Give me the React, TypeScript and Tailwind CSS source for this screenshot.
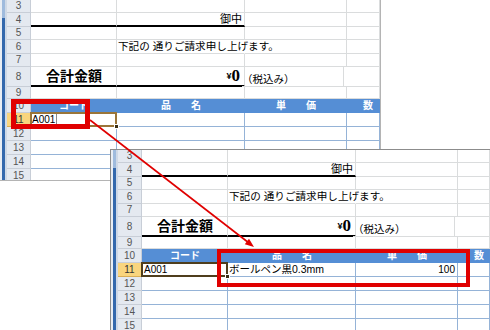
import React from "react";

type HeadProps = { n: string; active?: boolean };

const Head = ({ n, active }: HeadProps) => (
  <div
    className={`w-[24px] shrink-0 flex items-center justify-center border-r border-b text-[10px] leading-none ${
      active
        ? "bg-[#f9d57e] border-[#d9ad55] text-[#333]"
        : "bg-[#e4e9f0] border-[#c8ced7] text-[#555]"
    }`}
  >
    {n}
  </div>
);

const GRID = "border-b border-r border-[#dadcdd]";
const TGRID = "border-b border-r border-[#95b3d7]";

// left outline strip of the window
const Strip = () => (
  <div className="w-[7px] shrink-0 flex bg-[#dfe6ef]">
    <div className="w-[2px] bg-[#e9eef4]" />
    <div className="w-[3px] flex flex-col">
      <div className="h-[18px] bg-[#9fbbdd]" />
      <div className="flex-1 bg-[#3469ad]" />
    </div>
    <div className="w-[2px] bg-[#cfd9e6]" />
  </div>
);

type SheetProps = { filled?: boolean };

const Sheet = ({ filled }: SheetProps) => (
  <div className="flex h-full w-full bg-white overflow-hidden">
    <Strip />
    <div className="flex flex-col flex-1 overflow-hidden">
      {/* 3 */}
      <div className="flex h-[13px] shrink-0">
        <Head n="3" />
        <div className={`w-[86px] ${GRID}`} />
        <div className={`w-[128px] ${GRID}`} />
        <div className={`w-[102px] ${GRID}`} />
        <div className={`flex-1 ${GRID}`} />
      </div>
      {/* 4 */}
      <div className="flex h-[14px] shrink-0">
        <Head n="4" />
        <div className="w-[86px] border-r border-[#dadcdd] border-b-2 border-b-black" />
        <div className="w-[128px] border-r border-[#dadcdd] border-b-2 border-b-black flex items-center justify-end pr-[2px] text-[11px]">
          御中
        </div>
        <div className={`w-[102px] ${GRID}`} />
        <div className={`flex-1 ${GRID}`} />
      </div>
      {/* 5 */}
      <div className="flex h-[13px] shrink-0">
        <Head n="5" />
        <div className={`w-[86px] ${GRID}`} />
        <div className={`w-[128px] ${GRID}`} />
        <div className={`w-[102px] ${GRID}`} />
        <div className={`flex-1 ${GRID}`} />
      </div>
      {/* 6 */}
      <div className="flex h-[14px] shrink-0">
        <Head n="6" />
        <div className={`w-[86px] ${GRID}`} />
        <div className={`w-[128px] ${GRID} border-r-transparent flex items-center pl-[1px] text-[10.6px] whitespace-nowrap`}>
          下記の 通りご請求申し上げます。
        </div>
        <div className={`w-[102px] ${GRID}`} />
        <div className={`flex-1 ${GRID}`} />
      </div>
      {/* 7 */}
      <div className="flex h-[13px] shrink-0">
        <Head n="7" />
        <div className={`w-[86px] ${GRID}`} />
        <div className={`w-[128px] ${GRID}`} />
        <div className={`w-[102px] ${GRID}`} />
        <div className={`flex-1 ${GRID}`} />
      </div>
      {/* 8 */}
      <div className="flex h-[20px] shrink-0">
        <Head n="8" />
        <div className="w-[86px] border-r border-[#dadcdd] border-b-2 border-b-black flex items-end pl-[15px] pb-[1px] text-[14px] font-bold leading-[16px]">
          合計金額
        </div>
        <div className="w-[128px] border-r border-[#dadcdd] border-b-2 border-b-black flex items-end justify-end pr-[4px] pb-[1px] leading-none">
          <span className="text-[9px] font-bold mb-[3px]">¥</span>
          <span className="font-['Liberation_Serif',serif] font-bold text-[17px] leading-[16px]">0</span>
        </div>
        <div className={`w-[102px] ${GRID} flex items-end pb-[2px] -ml-[3px] text-[10.5px] leading-none whitespace-nowrap`}>
          （税込み）
        </div>
        <div className={`flex-1 ${GRID}`} />
      </div>
      {/* 9 */}
      <div className="flex h-[12px] shrink-0">
        <Head n="9" />
        <div className={`w-[86px] ${GRID}`} />
        <div className={`w-[128px] ${GRID}`} />
        <div className={`w-[102px] ${GRID}`} />
        <div className={`flex-1 ${GRID}`} />
      </div>
      {/* 10 header */}
      <div className="flex h-[14px] shrink-0">
        <Head n="10" />
        <div className="flex flex-1 items-center bg-[#558ed5] text-white font-bold text-[10px] leading-none">
          <div className="w-[86px] text-center">コード</div>
          <div className="w-[128px] text-center">品　　名</div>
          <div className="w-[102px] text-center">単　　価</div>
          <div className="flex-1 pl-[16px]">数</div>
        </div>
      </div>
      {/* 11 */}
      <div className="flex h-[14px] shrink-0">
        <Head n="11" active />
        <div className={`relative w-[86px] ${TGRID} flex items-center text-[10px]`}>
          {filled ? (
            <span className="pl-[2px]">A001</span>
          ) : (
            <span className="h-full flex items-center px-[1px] border-r border-[#8a8a8a]">A001</span>
          )}
          <div
            className={`absolute -left-px -top-px -right-px -bottom-px border-2 ${
              filled ? "border-[#4f3e1d]" : "border-[#9a7539]"
            }`}
          />
          <div className="absolute -right-[3px] -bottom-[3px] w-[5px] h-[5px] bg-[#3b2f15] border border-white" />
        </div>
        <div className={`w-[128px] ${TGRID} flex items-center pl-[1px] text-[10.5px] whitespace-nowrap`}>
          {filled ? "ボールペン黒0.3mm" : ""}
        </div>
        <div className={`w-[102px] ${TGRID} flex items-center justify-end pr-[2px] text-[10px]`}>
          {filled ? "100" : ""}
        </div>
        <div className={`flex-1 ${TGRID}`} />
      </div>
      {["12", "13", "14", "15"].map((n) => (
        <div key={n} className="flex h-[14px] shrink-0">
          <Head n={n} />
          <div className={`w-[86px] ${TGRID}`} />
          <div className={`w-[128px] ${TGRID}`} />
          <div className={`w-[102px] ${TGRID}`} />
          <div className={`flex-1 ${TGRID}`} />
        </div>
      ))}
    </div>
  </div>
);

export default function App() {
  return (
    <div className="relative w-[490px] h-[330px] overflow-hidden bg-white text-black font-['Liberation_Sans','Noto_Sans_CJK_JP',sans-serif]">
      {/* back window */}
      <div className="absolute left-0 top-0 w-[381px] h-[181px] border-r border-b border-[#b4b4b4]">
        <Sheet />
      </div>
      <div className="absolute left-[11px] top-[99px] w-[79px] h-[30px] border-[5px] border-[#e00000]" />

      {/* front window */}
      <div className="absolute left-[110px] top-[149px] w-[380px] h-[181px] border-l border-t border-[#8c8c8c]">
        <Sheet filled />
      </div>
      <div className="absolute left-[217px] top-[249px] w-[253px] h-[38px] border-4 border-[#e00000]" />

      {/* arrow */}
      <svg className="absolute inset-0 pointer-events-none" width="490" height="330">
        <line x1="90" y1="120" x2="249" y2="243" stroke="#e00000" strokeWidth="1.6" />
        <polygon points="254,247 244.8,244.3 249,238.7" fill="#e00000" />
      </svg>
    </div>
  );
}
